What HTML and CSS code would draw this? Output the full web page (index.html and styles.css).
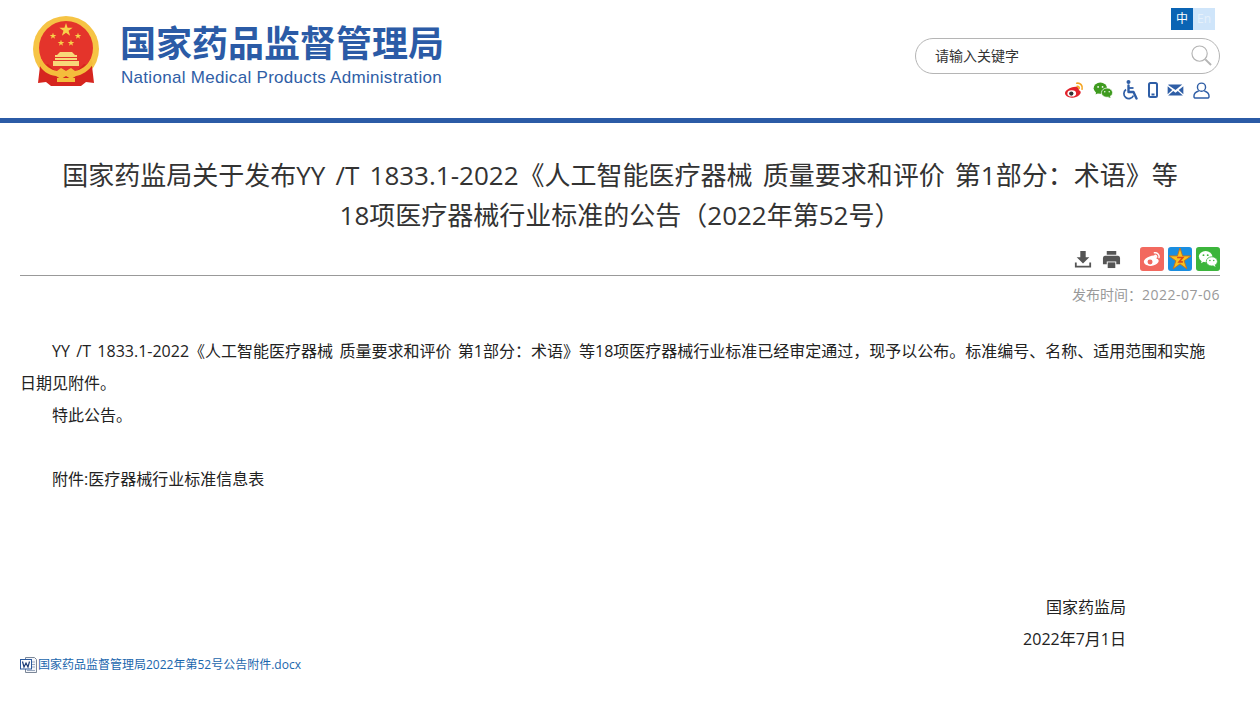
FILE: index.html
```html
<!DOCTYPE html>
<html lang="zh-CN">

<head>
  <meta charset="UTF-8" />
  <title>国家药监局关于发布YY /T 1833.1-2022《人工智能医疗器械 质量要求和评价 第1部分：术语》等18项医疗器械行业标准的公告（2022年第52号）</title>
  <link rel="stylesheet" href="styles.css">
</head>

<body>
  <svg class="defs" width="0" height="0">
    <symbol id="star" viewBox="-1 -1 2 2">
      <polygon points="0,-1 .225,-.31 .951,-.309 .363,.118 .588,.809 0,.382 -.588,.809 -.363,.118 -.951,-.309 -.225,-.31" />
    </symbol>
  </svg>

  <div class="header">
    <a class="logo" href="#">
      <svg class="emblem" viewBox="0 0 66 70" width="66" height="70">
        <circle cx="33" cy="33" r="33" fill="#f6c445" />
        <circle cx="33" cy="32" r="27" fill="#e4342b" />
        <use href="#star" x="26" y="7" width="14" height="14" fill="#f8d24a" />
        <use href="#star" x="16.5" y="16.5" width="7" height="7" fill="#f8d24a" />
        <use href="#star" x="41.5" y="16.5" width="7" height="7" fill="#f8d24a" />
        <use href="#star" x="24.5" y="23.5" width="7" height="7" fill="#f8d24a" />
        <use href="#star" x="34.5" y="23.5" width="7" height="7" fill="#f8d24a" />
        <path d="M27 36h12l3 3h2v2H22v-2h2zM22 42h22v2H22zM20 45h26v5H20z" fill="#f8d879" />
        <path d="M7 50l8-2 8 8 10 2 10-2 8-8 8 2 2 17-8-1-5 4H18l-5-4-8 1z" fill="#d6251f" />
        <path d="M8 43c4 7 10 11 16 12l4-3 5 3 5-3 4 3c6-1 12-5 16-12l2 5c-4 7-11 11-17 12l-5 3-5-3-5 3-5-3C15 59 9 55 6 48z" fill="#f4bd3c" />
        <path d="M24 62h18v4H24z" fill="#f4bd3c" />
      </svg>
      <span class="logo-text">
        <strong class="logo-cn">国家药品监督管理局</strong>
        <span class="logo-en">National Medical Products Administration</span>
      </span>
    </a>

    <div class="tools">
      <div class="lang">
        <a class="lang-cn" href="#">中</a>
        <a class="lang-en" href="#">En</a>
      </div>
      <form class="search">
        <input type="text" placeholder="请输入关键字">
        <svg viewBox="0 0 22 22" width="21" height="21" fill="none" stroke="#b4b4b4">
          <circle cx="9" cy="9" r="8" stroke-width="1.2" />
          <path d="M15 15l6 6" stroke-width="2" />
        </svg>
      </form>
      <div class="quick-icons">
        <svg viewBox="0 0 22 20" width="20" height="18">
          <path d="M9 7c3-1 6-1 7 1 1 .8 0 2 .5 2.3 2 .7 2.500 2.300 1.500 4C16.500 17 12.500 19 8.500 18.500 4 18 1 16 1 13.500 1 11 5 8 9 7z" fill="#e2222b" />
          <ellipse cx="8.500" cy="13.800" rx="4.800" ry="3.500" fill="#fff" />
          <circle cx="8" cy="14" r="2.400" fill="#333" />
          <path d="M14 2.500c4-.6 7 2.500 6 6.500M14.500 6c1.500-.2 2.500.9 2.200 2.300" fill="none" stroke="#f5a623" stroke-width="1.800" stroke-linecap="round" />
        </svg>
        <svg viewBox="0 0 22 18" width="20" height="16" fill="#3f9b1f">
          <ellipse cx="8" cy="7" rx="7.500" ry="6.300" />
          <path d="M3.500 10.500l-.8 3.500 3.500-2z" />
          <ellipse cx="15.500" cy="12" rx="6.300" ry="5.200" stroke="#fff" stroke-width=".8" />
          <path d="M18.500 15.500l1 2.500-3-1.200z" />
          <circle cx="5.500" cy="5.500" r="1" fill="#fff" />
          <circle cx="10.500" cy="5.500" r="1" fill="#fff" />
          <circle cx="13" cy="11" r=".8" fill="#fff" />
          <circle cx="18" cy="11" r=".8" fill="#fff" />
        </svg>
        <svg viewBox="0 0 17 20" width="17" height="20">
          <circle cx="6.500" cy="2" r="2" fill="#2f5ea6" />
          <path d="M6.500 5.500v6.500h5l3 6.500" fill="none" stroke="#2f5ea6" stroke-width="2.400" stroke-linejoin="round" stroke-linecap="round" />
          <path d="M6.500 8h5" stroke="#2f5ea6" stroke-width="1.800" />
          <path d="M4 9.500a5 5 0 1 0 7.500 6" fill="none" stroke="#2f5ea6" stroke-width="1.700" />
        </svg>
        <svg viewBox="0 0 10 16" width="10" height="16">
          <rect x="1" y="1" width="8" height="14" rx="1.500" fill="none" stroke="#2f5ea6" stroke-width="2" />
          <rect x="3.500" y="11.500" width="3" height="2" fill="#2f5ea6" />
        </svg>
        <svg viewBox="0 0 17 13" width="17" height="12" fill="#2f5ea6">
          <path d="M.5 1.200C.5.800.8.500 1.200.500h14.600l-7.300 6zM0 2.500l5 4L0 11zM17 2.500v8.500l-5-4.500zM6 7.500L8.500 9.500 11 7.500l5.500 5H.5z" />
        </svg>
        <svg class="quick-user" viewBox="0 0 18 18" width="17" height="17" fill="none" stroke="#2f5ea6" stroke-width="1.500">
          <circle cx="9" cy="5.500" r="4.300" />
          <path d="M6 9.500C3 10.500 1 12.500 1 15c0 1.500 1 2 2 2h12c1 0 2-.5 2-2 0-2.500-2-4.500-5-5.500" />
        </svg>
      </div>
    </div>
  </div>

  <div class="article">
    <h1 class="article-title">国家药监局关于发布YY /T 1833.1-2022《人工智能医疗器械 质量要求和评价 第1部分：术语》等18项医疗器械行业标准的公告（2022年第52号）</h1>

    <div class="share-bar">
      <svg class="share-plain" viewBox="0 0 20 20" width="18" height="18" fill="#555">
        <path d="M7 1h6v7h4l-7 7-7-7h4z" />
        <path d="M1 14h2v3.500h14V14h2v5.500H1z" />
      </svg>
      <svg class="share-plain" viewBox="0 0 20 20" width="19" height="19" fill="#555">
        <path d="M5 1h10v4H5zM3 6h14a2.500 2.500 0 0 1 2 2.500V15h-4v-3H5v3H1V8.500A2.500 2.500 0 0 1 3 6z" />
        <path d="M6 13h8v6H6z" />
      </svg>
      <svg class="share-tile share-first" viewBox="0 0 25 25" width="24" height="24">
        <rect width="25" height="25" rx="3" fill="#f2695f" />
        <path d="M10 10c3-1.500 6-1.500 7 .3.500 1 0 1.700.500 2 2 .7 2.500 2 1.500 3.700-1.500 2.500-5 4-8.500 3.700-4-.3-6.500-2-6.500-4.500 0-1.700 2.500-4 6-5.200z" fill="#fff" />
        <circle cx="10.500" cy="15.700" r="2.600" fill="#f2695f" />
        <path d="M15 6c3-.500 5.500 2 4.800 5M15.500 8.700c1.200-.2 2 .7 1.800 1.800" fill="none" stroke="#fff" stroke-width="1.500" stroke-linecap="round" />
      </svg>
      <svg class="share-tile" viewBox="0 0 25 25" width="24" height="24">
        <rect width="25" height="25" rx="3" fill="#1a8ee0" />
        <use href="#star" x=".5" y="1" width="24" height="24" fill="#f9c21e" stroke="#c9731a" stroke-width=".08" />
        <path d="M9.500 11h6l-4 4.500h4" fill="none" stroke="#d9481c" stroke-width="1.600" />
      </svg>
      <svg class="share-tile" viewBox="0 0 25 25" width="24" height="24">
        <rect width="25" height="25" rx="3" fill="#3cb53c" />
        <ellipse cx="10" cy="10" rx="7" ry="5.800" fill="#fff" />
        <path d="M6 14l-.7 3 3-1.800z" fill="#fff" />
        <ellipse cx="16.500" cy="15" rx="5.800" ry="4.800" fill="#fff" stroke="#3cb53c" stroke-width=".8" />
        <path d="M19.500 18.500l1 2-2.800-1z" fill="#fff" />
        <circle cx="7.800" cy="8.500" r="1" fill="#3cb53c" />
        <circle cx="12.200" cy="8.500" r="1" fill="#3cb53c" />
        <circle cx="14.500" cy="14" r=".8" fill="#3cb53c" />
        <circle cx="18.500" cy="14" r=".8" fill="#3cb53c" />
      </svg>
    </div>

    <div class="publish-date">发布时间：<span class="date-value">2022-07-06</span></div>

    <div class="article-body">
      <p class="indent">YY /T 1833.1-2022《人工智能医疗器械 质量要求和评价 第1部分：术语》等18项医疗器械行业标准已经审定通过，现予以公布。标准编号、名称、适用范围和实施日期见附件。</p>
      <p class="indent">特此公告。</p>
      <p class="blank"></p>
      <p class="indent">附件:医疗器械行业标准信息表</p>
      <p class="blank"></p>
      <p class="blank"></p>
      <p class="blank"></p>
      <p class="sign">国家药监局</p>
      <p class="sign">2022年7月1日</p>
    </div>

    <a class="attachment" href="#">
      <svg viewBox="0 0 17 16" width="17" height="16">
        <path d="M5.500.500h9l2 2v13h-11z" fill="#f4f6fa" stroke="#7b8798" />
        <path d="M12 5h3M12 7.500h3M12 10h3M7 13.500h8" stroke="#9aa9bf" />
        <rect x=".5" y="2.500" width="11" height="9.500" fill="#fff" stroke="#2c5a9e" />
        <path d="M2.500 4.500l1.500 5.500 2-4 2 4 1.500-5.500" fill="none" stroke="#1f3f78" stroke-width="1.200" />
      </svg>
      <span>国家药品监督管理局2022年第52号公告附件.docx</span>
    </a>
  </div>
</body>

</html>
```

FILE: styles.css
```css
* {
  box-sizing: border-box;
}

body {
  margin: 0;
  font-family: 'Open Sans', 'Noto Sans CJK SC', sans-serif;
  background: #fff;
  color: #333;
}

a {
  text-decoration: none;
}

svg {
  display: block;
  flex: none;
}

.defs {
  position: absolute;
}

.header {
  display: flex;
  justify-content: space-between;
  height: 123px;
  padding: 8px 40px 0 33px;
  border-bottom: 5px solid #2b5ba6;
}

.logo {
  display: flex;
  align-items: flex-start;
  gap: 21px;
  padding-top: 8px;
}

.logo-text {
  display: flex;
  flex-direction: column;
  width: 322px;
  padding-top: 5px;
}

.logo-cn {
  font-family: 'Noto Sans CJK SC', sans-serif;
  font-size: 36px;
  font-weight: 700;
  line-height: 40px;
  white-space: nowrap;
  color: #2b5ba6;
}

.logo-en {
  margin: 7px 0 0 1px;
  font-family: 'Liberation Sans', sans-serif;
  font-size: 17px;
  line-height: 20px;
  letter-spacing: 0.3px;
  white-space: nowrap;
  color: #2f5ea6;
}

.tools {
  display: flex;
  flex-direction: column;
  align-items: flex-end;
  width: 305px;
}

.lang {
  display: flex;
  margin-right: 5px;
}

.lang a {
  width: 22px;
  height: 22px;
  font-size: 12px;
  line-height: 22px;
  text-align: center;
}

.lang-cn {
  background: #0a64b4;
  color: #fff;
}

.lang-en {
  background: #cfe5fa;
  color: #e6f1fb;
}

.search {
  display: flex;
  align-items: center;
  width: 305px;
  height: 36px;
  margin-top: 8px;
  padding: 0 7px 2px 19px;
  border: 1px solid #b5b5b5;
  border-radius: 18px;
}

.search input {
  flex: 1;
  min-width: 0;
  border: none;
  outline: none;
  padding: 0;
  font-family: inherit;
  font-size: 14px;
  color: #333;
}

.search input::placeholder {
  color: #333;
  opacity: 1;
}

.quick-icons {
  display: flex;
  align-items: center;
  gap: 9px;
  margin: 6px 10px 0 0;
  height: 20px;
}

.article {
  padding: 0 40px 0 20px;
}

.article-title {
  margin: 32px 0 0;
  padding: 0 30px;
  font-size: 26px;
  font-weight: 400;
  line-height: 40px;
  text-align: center;
  word-spacing: 0.13em;
  color: #333;
}

.share-bar {
  display: flex;
  justify-content: flex-end;
  align-items: center;
  gap: 4px;
  height: 37px;
  margin-top: 4px;
  padding: 8px 0 4px;
  border-bottom: 1px solid #999;
}

.share-plain {
  margin-right: 6px;
}

.share-first {
  margin-left: 9px;
}

.publish-date {
  margin-top: 9px;
  font-size: 14px;
  line-height: 20px;
  text-align: right;
  color: #999;
}

.date-value {
  letter-spacing: 0.5px;
}

.article-body {
  margin-top: 30px;
  font-size: 16px;
  line-height: 32px;
  word-spacing: 0.14em;
  color: #222;
}

.article-body p {
  margin: 0;
}

.indent {
  text-indent: 32px;
}

.blank {
  height: 32px;
}

.sign {
  padding-right: 94px;
  text-align: right;
}

.attachment {
  display: flex;
  align-items: center;
  gap: 1px;
  margin-top: 1px;
  font-size: 12px;
  line-height: 18px;
  color: #1a66ad;
}
```
